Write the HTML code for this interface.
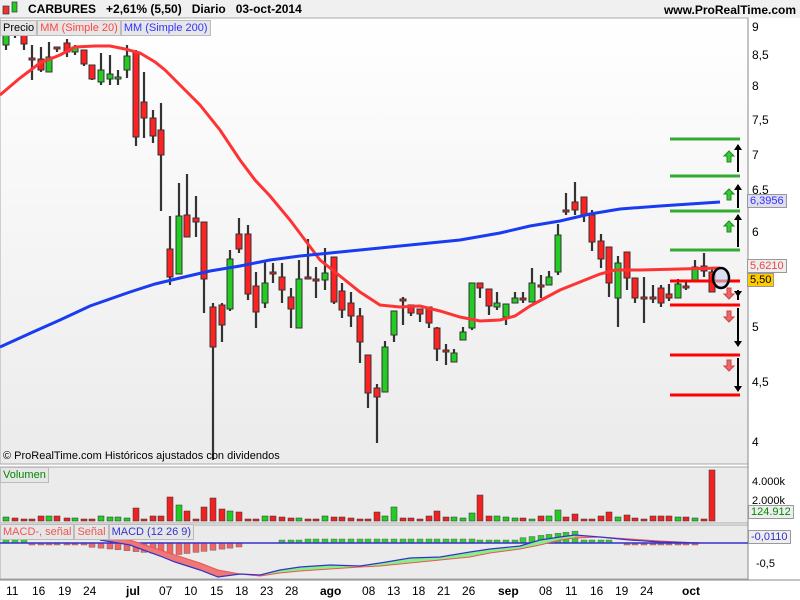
<!DOCTYPE html><html><head><meta charset="utf-8"><style>
body{margin:0;width:800px;height:600px;overflow:hidden;background:#fff;font-family:"Liberation Sans",sans-serif;position:relative}
.t{position:absolute;font-size:12px;white-space:nowrap}
.ax{position:absolute;font-size:12px;color:#000}
.lr{position:absolute;display:flex;left:0}
.lr span{height:14px;font-size:11px;line-height:14px;background:#e6e6e6;border:1px solid #bbb;padding:0 2px;white-space:nowrap}
</style></head><body>
<svg width="800" height="600" style="position:absolute;left:0;top:0">
<defs><linearGradient id="g" x1="0" y1="0" x2="0" y2="1"><stop offset="0" stop-color="#fff"/><stop offset="1" stop-color="#ebebeb"/></linearGradient></defs>
<rect x="0" y="0" width="800" height="18" fill="#f0f0f0"/>
<rect x="0" y="18" width="748" height="446" fill="url(#g)" stroke="#aaa"/>
<rect x="0" y="467" width="748" height="56" fill="#ebebeb" stroke="#aaa"/>
<rect x="0" y="525" width="748" height="54" fill="#ebebeb" stroke="#aaa"/>
<line x1="748" y1="18" x2="748" y2="580" stroke="#888"/>
<line x1="0" y1="580" x2="800" y2="580" stroke="#888"/>
<rect x="3" y="6" width="6" height="8" fill="#e33" stroke="#333" stroke-width=".7"/>
<rect x="12" y="2" width="5" height="10" fill="#2c2" stroke="#333" stroke-width=".7"/>
<g id="m"></g>
<g id="c"></g>
<polyline fill="none" stroke="#f33" stroke-width="3" points="0,95 20,78 40,63 60,55 75,47 95,46 110,46 125,49 140,53 155,62 165,70 180,85 200,105 220,130 240,160 255,180 270,196 290,220 305,240 320,260 330,268 345,280 360,292 380,305 400,307 420,306 440,311 460,317 480,321 500,320 515,316 530,306 545,298 560,290 575,284 590,278 600,274 615,270 640,270 680,269 720,268"/>
<polyline fill="none" stroke="#1a3cf0" stroke-width="3" points="0,347 33,332 60,320 90,306 130,292 155,284 180,278 210,271 240,266 270,260 300,256 330,253 380,248 420,244 460,240 500,233 530,226 560,221 590,214 620,209 660,206 690,204 720,202"/>
<g stroke-width="3">
<line x1="670" y1="139" x2="740" y2="139" stroke="#3a3"/><line x1="670" y1="176" x2="740" y2="176" stroke="#3a3"/><line x1="670" y1="211" x2="740" y2="211" stroke="#3a3"/><line x1="670" y1="250" x2="740" y2="250" stroke="#3a3"/>
<line x1="670" y1="281" x2="740" y2="281" stroke="#f00"/><line x1="670" y1="305" x2="740" y2="305" stroke="#f00"/><line x1="670" y1="355" x2="740" y2="355" stroke="#f00"/><line x1="670" y1="395" x2="740" y2="395" stroke="#f00"/>
</g>
<g stroke="#000" stroke-width="2"><line x1="738" y1="145" x2="738" y2="172"/><line x1="738" y1="185" x2="738" y2="208"/><line x1="738" y1="215" x2="738" y2="247"/><line x1="738" y1="290" x2="738" y2="300"/><line x1="738" y1="308" x2="738" y2="342"/><line x1="738" y1="358" x2="738" y2="388"/></g>
<g fill="#000"><path d="M734,150 l4,-6 4,6z"/><path d="M734,190 l4,-6 4,6z"/><path d="M734,220 l4,-6 4,6z"/><path d="M734,291 l4,6 4,-6z"/><path d="M734,341 l4,6 4,-6z"/><path d="M734,386 l4,6 4,-6z"/></g>
<g fill="#3c3" stroke="#282"><path d="M727,162 v-6 h-3 l5,-5 5,5 h-3 v6z"/><path d="M727,200 v-6 h-3 l5,-5 5,5 h-3 v6z"/><path d="M727,232 v-6 h-3 l5,-5 5,5 h-3 v6z"/></g>
<g fill="#e66" stroke="#c44"><path d="M727,288 v6 h-3 l5,5 5,-5 h-3 v-6z"/><path d="M727,311 v6 h-3 l5,5 5,-5 h-3 v-6z"/><path d="M727,360 v6 h-3 l5,5 5,-5 h-3 v-6z"/></g>
<ellipse cx="721" cy="278" rx="8" ry="10" fill="#c8d4f0" fill-opacity=".6" stroke="#000" stroke-width="2.5"/>
</svg>
<div class="t" style="left:28px;top:2px;font-weight:bold;font-size:12px">CARBURES &nbsp;&nbsp;+2,61% (5,50) &nbsp;&nbsp;Diario &nbsp;&nbsp;03-oct-2014</div>
<div class="t" style="right:4px;top:3px;font-weight:bold;font-size:12px">www.ProRealTime.com</div>
<div class="lr" style="top:20px"><span>Precio</span><span style="color:#f44">MM (Simple 20)</span><span style="color:#33f">MM (Simple 200)</span></div>
<div class="t" style="left:3px;top:450px;font-size:11px">© ProRealTime.com Históricos ajustados con dividendos</div>
<div class="lr" style="top:467px"><span style="color:#080">Volumen</span></div>
<div class="lr" style="top:524px"><span style="color:#e55">MACD-, señal</span><span style="color:#e55">Señal</span><span style="color:#33c">MACD (12 26 9)</span></div>
<div class="ax" style="left:752px;top:20px">9</div><div class="ax" style="left:752px;top:48px">8,5</div><div class="ax" style="left:752px;top:79px">8</div><div class="ax" style="left:752px;top:113px">7,5</div><div class="ax" style="left:752px;top:148px">7</div><div class="ax" style="left:752px;top:183px">6,5</div><div class="ax" style="left:752px;top:225px">6</div><div class="ax" style="left:752px;top:320px">5</div><div class="ax" style="left:752px;top:375px">4,5</div><div class="ax" style="left:752px;top:435px">4</div>
<div class="ax" style="left:747px;top:194px;background:#dde;border:1px solid #999;color:#33f;font-size:11px;padding:0 2px">6,3956</div>
<div class="ax" style="left:747px;top:259px;background:#eee;border:1px solid #999;color:#e44;font-size:11px;padding:0 2px">5,6210</div>
<div class="ax" style="left:747px;top:273px;background:#fc0;border:1px solid #999;font-size:11px;padding:0 2px">5,50</div>
<div class="ax" style="left:752px;top:476px;font-size:11px">4.000k</div><div class="ax" style="left:752px;top:495px;font-size:11px">2.000k</div>
<div class="ax" style="left:748px;top:505px;background:#eee;border:1px solid #999;color:#080;font-size:11px;padding:0 2px">124.912</div>
<div class="ax" style="left:748px;top:530px;background:#eee;border:1px solid #999;color:#33c;font-size:11px;padding:0 2px">-0,0110</div>
<div class="ax" style="left:756px;top:558px;font-size:11px">-0,5</div>
<div id="d"></div>
<script>
var C=[[6,35,45,28,50,'g'],[15,33,34,30,38,'k'],[24,35,44,30,50,'r'],[32,58,59,45,80,'r'],[41,59,70,47,72,'r'],[49,57,72,42,72,'g'],[57,47,48,47,52,'k'],[67,43,52,39,57,'r'],[75,47,52,45,55,'g'],[84,50,64,50,66,'r'],[92,65,79,65,80,'r'],[101,70,82,53,85,'g'],[110,74,79,55,85,'g'],[118,77,79,70,85,'g'],[127,56,70,45,78,'g'],[136,52,137,50,146,'r'],[144,102,118,72,138,'r'],[153,118,136,110,143,'r'],[161,130,155,103,211,'r'],[170,249,277,216,285,'r'],[179,216,274,183,274,'g'],[187,215,237,174,237,'r'],[196,218,222,196,237,'r'],[204,222,279,222,313,'r'],[213,307,347,303,460,'r'],[222,305,325,303,342,'r'],[230,259,309,250,311,'g'],[239,234,249,218,253,'r'],[248,234,294,225,300,'r'],[256,286,312,272,328,'r'],[265,283,303,260,308,'g'],[273,272,273,263,283,'k'],[282,277,290,263,303,'r'],[291,297,309,288,328,'r'],[299,279,328,260,328,'g'],[308,277,278,239,278,'k'],[316,279,280,267,298,'k'],[325,273,280,248,290,'g'],[334,257,302,257,304,'r'],[342,291,310,283,318,'r'],[351,303,316,292,327,'r'],[360,316,342,308,363,'r'],[368,355,393,355,408,'r'],[377,388,397,384,443,'r'],[385,347,392,341,392,'g'],[394,311,335,311,342,'g'],[403,299,300,297,325,'k'],[411,305,313,305,316,'r'],[420,309,314,309,322,'r'],[429,307,323,307,328,'r'],[437,328,349,327,361,'r'],[446,350,351,344,365,'r'],[454,353,362,349,362,'g'],[463,332,340,327,340,'g'],[472,283,328,283,330,'g'],[480,283,288,283,298,'r'],[489,289,306,289,315,'r'],[497,303,307,292,310,'g'],[506,304,317,304,325,'g'],[515,298,303,292,303,'g'],[523,298,300,292,303,'r'],[532,283,302,268,302,'g'],[541,285,286,275,298,'k'],[549,277,285,271,285,'g'],[558,235,272,224,275,'g'],[566,210,211,193,215,'k'],[575,202,210,182,215,'r'],[584,197,215,197,222,'r'],[592,215,242,210,251,'r'],[601,241,259,234,268,'r'],[609,247,283,247,297,'r'],[618,263,298,256,327,'g'],[627,252,278,252,290,'r'],[635,278,298,278,303,'r'],[644,297,298,277,323,'k'],[653,297,298,285,303,'k'],[661,288,303,285,307,'r'],[669,294,298,284,301,'r'],[678,284,298,279,298,'g'],[686,286,287,280,290,'k'],[695,267,280,260,280,'g'],[704,266,271,253,277,'r'],[712,272,292,268,292,'r']];
var V={136:13,170:24,179:16,187:10,204:14,213:23,222:12,230:10,239:9,377:9,394:14,437:10,472:8,480:26,558:11,575:7,609:9,712:51,627:6,504:5};
var s='',m='';
C.forEach(function(c){var x=c[0]-3,col=c[5]=='g'?'#2c2':'#f22',h=Math.max(c[2]-c[1],2);
s+='<line x1="'+c[0]+'" y1="'+c[3]+'" x2="'+c[0]+'" y2="'+c[4]+'" stroke="#333" stroke-width="2.2"/><rect x="'+x+'" y="'+c[1]+'" width="6" height="'+h+'" fill="'+col+'" stroke="#333"/>';
var v=V[c[0]]||(2+(c[0]*7)%4);
s+='<rect x="'+x+'" y="'+(521-v)+'" width="6" height="'+v+'" fill="'+(c[5]=='g'?'#2c2':'#e22')+'" stroke="#333" stroke-width=".5"/>';
var X=c[0],hh;
if(X<25)hh=-5;else if(X<90)hh=2;else if(X<175)hh=4+(X-90)/10;else if(X<240)hh=12-(X-175)/8;else if(X<280)hh=0;else if(X<520)hh=-3-(X>300&&X<480?1:0);else if(X<580)hh=-5-(X-520)/8;else if(X<610)hh=-3;else if(X<625)hh=0;else if(X<700)hh=2;else hh=0;
if(Math.abs(hh)>=1)m+='<rect x="'+x+'" y="'+(hh<0?543+hh:543)+'" width="6" height="'+Math.abs(hh)+'" fill="'+(hh<0?'#3c3':'#e66')+'" stroke="#555" stroke-width=".4"/>';
});
var B=[[100,540],[130,545],[160,556],[175,562],[200,570],[218,577],[240,574],[260,575],[280,570],[300,567],[330,565],[360,566],[380,563],[410,558],[440,557],[470,552],[490,549],[520,546],[540,540],[560,537],[575,535],[600,537],[630,540],[660,542],[700,543]];
var S=[[100,537],[130,540],[160,550],[175,555],[200,563],[218,570],[240,574],[260,576],[280,573],[300,571],[330,569],[360,567],[380,566],[410,563],[440,560],[470,557],[490,553],[520,549],[540,545],[560,540],[575,538],[600,537],[630,539],[660,541],[700,543]];
function pts(a){return a.map(function(p){return p[0]+','+p[1]}).join(' ')}
var r1=B.slice(0,7),s1=S.slice(0,7).reverse();
var r2=B.slice(6,21),s2=S.slice(6,21).reverse();
var r3=B.slice(20),s3=S.slice(20).reverse();
m+='<line x1="0" y1="543" x2="748" y2="543" stroke="#33c" stroke-width="1.5"/>';
m+='<polygon points="'+pts(r1.concat(s1))+'" fill="#e77"/>';
m+='<polygon points="'+pts(r2.concat(s2))+'" fill="#8e8"/>';
m+='<polygon points="'+pts(r3.concat(s3))+'" fill="#e99"/>';
m+='<polyline fill="none" stroke="#e55" stroke-width="1" points="'+pts(S)+'"/>';
m+='<polyline fill="none" stroke="#33c" stroke-width="1.2" points="'+pts(B)+'"/>';
document.getElementById('c').innerHTML=s;
document.getElementById('m').innerHTML=m;
var L=[[14,'11'],[40,'16'],[66,'19'],[91,'24'],[134,'jul',1],[167,'07'],[192,'10'],[218,'15'],[243,'18'],[268,'23'],[293,'28'],[328,'ago',1],[370,'08'],[395,'13'],[420,'18'],[445,'21'],[470,'26'],[506,'sep',1],[547,'08'],[573,'11'],[598,'16'],[623,'19'],[648,'24'],[690,'oct',1]];
var h='';L.forEach(function(l){h+='<div class="ax" style="left:'+(l[0]-8)+'px;top:584px;'+(l[2]?'font-weight:bold':'')+'">'+l[1]+'</div>'});
document.getElementById('d').innerHTML=h;
</script>
</body></html>
